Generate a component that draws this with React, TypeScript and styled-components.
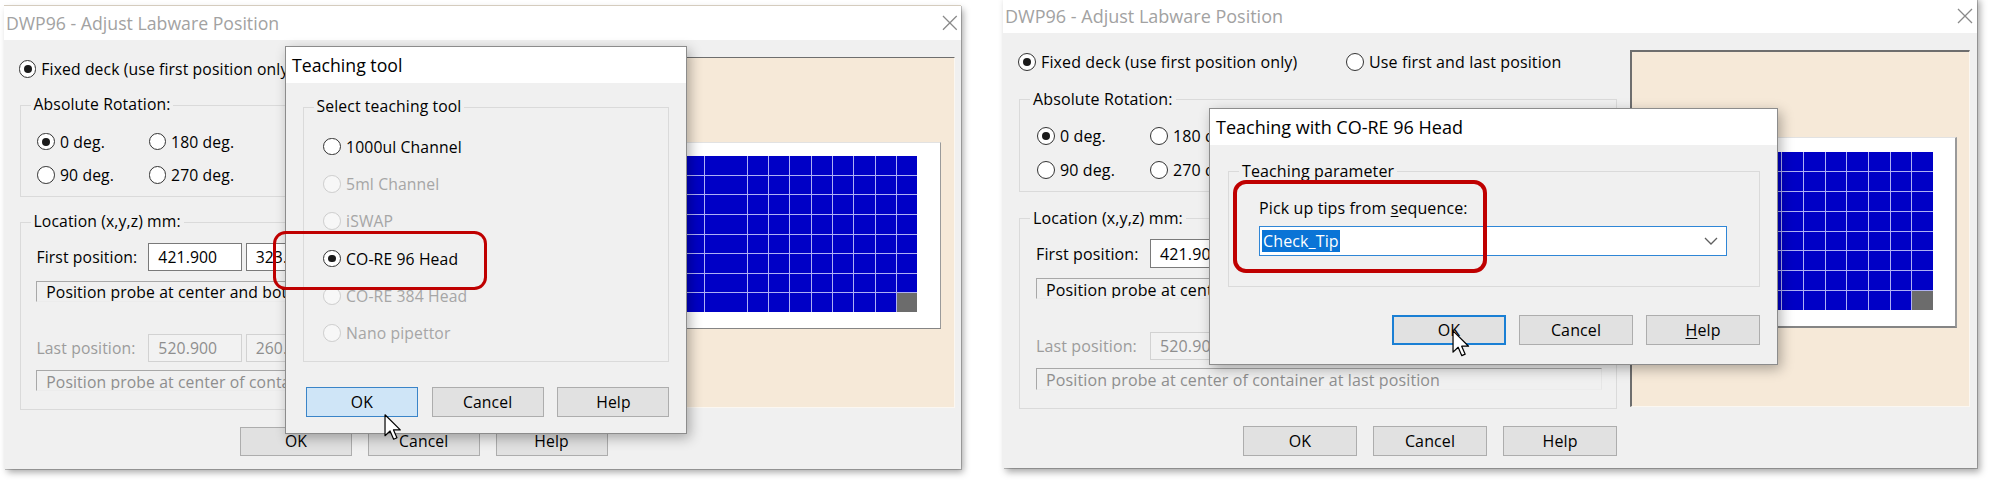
import React from 'react';
import styled, { createGlobalStyle, css } from 'styled-components';

const FONT = `"Open Sans", "Noto Sans", "Liberation Sans", sans-serif`;

const GlobalStyle = createGlobalStyle`
  html, body { margin: 0; padding: 0; background: #ffffff; }
  body { font-family: ${FONT}; overflow: hidden; color: #000; }
  *, *::before, *::after { box-sizing: border-box; }
`;

const Stage = styled.div`
  width: 1989px;
  height: 482px;
  overflow: hidden;
  display: flex;
  align-items: flex-start;
  background: #ffffff;
`;

const Slot = styled.div<{ $left: number; $top: number }>`
  flex: none;
  margin-left: ${(p) => p.$left}px;
  margin-top: ${(p) => p.$top}px;
`;

const WindowFrame = styled.div<{ $zoom: number }>`
  position: relative;
  zoom: ${(p) => p.$zoom};
  width: 974px;
  height: 472px;
  background: #f0f0f0;
  border-top: 2px solid #d5ccbe;
  box-shadow: 1px 1px 0 rgba(0, 0, 0, 0.22), 3px 4px 7px rgba(0, 0, 0, 0.35);
  display: flex;
  flex-direction: column;
  font-size: 16px;
  letter-spacing: 0.12px;
`;

const TitleBar = styled.div`
  height: 35px;
  flex: none;
  background: #ffffff;
  display: flex;
  align-items: center;
  justify-content: space-between;
  padding: 0 4px 0 2px;
`;

const TitleText = styled.span<{ $active?: boolean }>`
  font-size: 18px;
  letter-spacing: 0;
  color: ${(p) => (p.$active ? '#000000' : '#a2a2a2')};
  white-space: nowrap;
`;

const WindowBody = styled.div`
  flex: 1;
  display: grid;
  grid-template-columns: 598px 340px;
  column-gap: 13px;
  align-items: start;
  padding: 17px 7px 0 16px;
`;

const LeftColumn = styled.div`
  display: flex;
  flex-direction: column;
`;

const ModeRow = styled.div`
  height: 24px;
  display: flex;
  align-items: center;
  margin-left: -1px;
`;

const ModeCell = styled.div`
  width: 328px;
  flex: none;
`;

const RadioItem = styled.div<{ $disabled?: boolean }>`
  display: flex;
  align-items: center;
  gap: 5px;
  height: 24px;
  white-space: nowrap;
  color: ${(p) => (p.$disabled ? '#a6a6a6' : '#000000')};
`;

const RadioCircle = styled.span<{ $checked?: boolean; $disabled?: boolean }>`
  width: 18px;
  height: 18px;
  flex: none;
  border-radius: 50%;
  border: 1.6px solid ${(p) => (p.$disabled ? '#cdcdcd' : '#333333')};
  background: ${(p) => (p.$disabled ? '#f7f7f7' : '#ffffff')};
  display: grid;
  place-items: center;
  &::after {
    content: '';
    width: 8px;
    height: 8px;
    border-radius: 50%;
    background: #1b1b1b;
    display: ${(p) => (p.$checked ? 'block' : 'none')};
  }
`;

const Group = styled.fieldset<{ $top: number; $height?: number }>`
  margin: ${(p) => p.$top}px 0 0 0;
  padding: 0;
  border: 1px solid #dadada;
  min-width: 0;
  ${(p) =>
    p.$height !== undefined &&
    css`
      height: ${p.$height}px;
    `}
`;

const Legend = styled.legend`
  margin-left: 10px;
  padding: 0 3px;
  line-height: 20px;
  font-size: 16px;
  white-space: nowrap;
`;

const RotationGrid = styled.div`
  display: grid;
  grid-template-columns: 113px auto;
  row-gap: 10px;
  padding: 15px 0 9px 17px;
`;

const LocationInner = styled.div`
  display: flex;
  flex-direction: column;
  padding: 0 14px 18px 16px;
`;

const CoordRow = styled.div<{ $top: number; $height: number; $disabled?: boolean }>`
  display: flex;
  align-items: center;
  margin-top: ${(p) => p.$top}px;
  height: ${(p) => p.$height}px;
  color: ${(p) => (p.$disabled ? '#9c9c9c' : '#000000')};
`;

const CoordLabel = styled.span`
  width: 114px;
  flex: none;
  white-space: nowrap;
`;

const CoordInputs = styled.div`
  display: flex;
  gap: 4px;
  height: 100%;
`;

const CoordField = styled.div<{ $disabled?: boolean }>`
  width: 95px;
  height: 100%;
  display: flex;
  align-items: center;
  padding-left: 9px;
  background: ${(p) => (p.$disabled ? '#f2f2f2' : '#ffffff')};
  border: 1px solid ${(p) => (p.$disabled ? '#d2d2d2' : '#7a7a7a')};
  color: ${(p) => (p.$disabled ? '#8e8e8e' : '#000000')};
`;

const HintBox = styled.div<{ $top: number; $height: number; $disabled?: boolean }>`
  margin-top: ${(p) => p.$top}px;
  height: ${(p) => p.$height}px;
  padding-left: 9px;
  line-height: ${(p) => p.$height + 1}px;
  white-space: nowrap;
  overflow: hidden;
  border-top: 1px solid #a8a8a8;
  border-left: 1px solid #a8a8a8;
  border-right: 1px solid #e6e6e6;
  border-bottom: 1px solid #ececec;
  color: ${(p) => (p.$disabled ? '#8e8e8e' : '#000000')};
`;

const ButtonRow = styled.div<{ $top: number; $gap: number }>`
  display: flex;
  justify-content: flex-end;
  gap: ${(p) => p.$gap}px;
  margin-top: ${(p) => p.$top}px;
`;

const Button = styled.div<{ $state?: 'hover' | 'focus' }>`
  width: 114px;
  height: 30px;
  flex: none;
  display: flex;
  align-items: center;
  justify-content: center;
  font-size: 16px;
  background: #e1e1e1;
  border: 1px solid #adadad;
  ${(p) =>
    p.$state === 'hover' &&
    css`
      background: #cfe5f7;
      border-color: #3a84c8;
    `}
  ${(p) =>
    p.$state === 'focus' &&
    css`
      border: 2px solid #1a7fd4;
    `}
`;

const Preview = styled.div`
  height: 357px;
  background: #f6e9d8;
  border-top: 2px solid #6e6e6e;
  border-left: 2px solid #6e6e6e;
  border-right: 1px solid #fbf7f1;
  border-bottom: 1px solid #fbf7f1;
  padding: 85px 0 0 18px;
`;

const Plate = styled.div`
  width: 307px;
  height: 191px;
  background: #ffffff;
  border-top: 1px solid #e2e2e2;
  border-left: 1px solid #e2e2e2;
  border-right: 2px solid #9a9a9a;
  border-bottom: 2px solid #858585;
  padding: 14px 0 0 23px;
`;

const WellGrid = styled.div`
  width: 259px;
  height: 158px;
  display: grid;
  grid-template-columns: repeat(12, 1fr);
  grid-template-rows: repeat(8, 1fr);
  gap: 1px;
  background: #aeb0f4;
`;

const Well = styled.div<{ $empty?: boolean }>`
  background: ${(p) => (p.$empty ? '#6c6c6c' : '#0000c6')};
`;

const Dialog = styled.div<{ $left: number; $top: number; $width: number; $height: number }>`
  position: absolute;
  left: ${(p) => p.$left}px;
  top: ${(p) => p.$top}px;
  width: ${(p) => p.$width}px;
  height: ${(p) => p.$height}px;
  background: #f0f0f0;
  border: 1px solid #8c8c8c;
  box-shadow: 3px 4px 12px rgba(0, 0, 0, 0.3);
  display: flex;
  flex-direction: column;
`;

const DialogTitle = styled.div`
  height: 36px;
  flex: none;
  background: #ffffff;
  display: flex;
  align-items: center;
  padding-left: 6px;
`;

const DialogBody = styled.div<{ $pl: number; $pr: number; $pt: number }>`
  flex: 1;
  display: flex;
  flex-direction: column;
  padding: ${(p) => p.$pt}px ${(p) => p.$pr}px 0 ${(p) => p.$pl}px;
`;

const ToolList = styled.div`
  display: flex;
  flex-direction: column;
  gap: 14px;
  padding: 18px 0 0 20px;
`;

const ParamInner = styled.div`
  display: flex;
  flex-direction: column;
  padding: 17px 0 0 30px;
`;

const ParamLabel = styled.div`
  height: 20px;
  line-height: 20px;
  white-space: nowrap;
  u {
    text-decoration-thickness: 1px;
    text-underline-offset: 2px;
  }
`;

const Combo = styled.div`
  margin-top: 8px;
  width: 468px;
  height: 30px;
  background: #ffffff;
  border: 1px solid #2f86d6;
  display: flex;
  align-items: center;
  justify-content: space-between;
  padding: 0 8px 0 2px;
`;

const Selected = styled.span`
  background: #0a74d6;
  color: #ffffff;
  line-height: 22px;
  padding: 0 1px;
`;

const Annotation = styled.div<{ $left: number; $top: number; $width: number; $height: number }>`
  position: absolute;
  left: ${(p) => p.$left}px;
  top: ${(p) => p.$top}px;
  width: ${(p) => p.$width}px;
  height: ${(p) => p.$height}px;
  border: 4px solid #bf0000;
  border-radius: 13px;
  pointer-events: none;
`;

const Pointer = styled.svg<{ $left: number; $top: number }>`
  position: absolute;
  left: ${(p) => p.$left}px;
  top: ${(p) => p.$top}px;
  overflow: visible;
`;

const HelpKey = styled.span`
  u {
    text-decoration-thickness: 1px;
    text-underline-offset: 2px;
  }
`;

function Radio({ label, checked, disabled }: { label: string; checked?: boolean; disabled?: boolean }) {
  return (
    <RadioItem $disabled={disabled}>
      <RadioCircle $checked={checked} $disabled={disabled} />
      <span>{label}</span>
    </RadioItem>
  );
}

function CloseGlyph() {
  return (
    <svg width="16" height="16" viewBox="0 0 16 16">
      <path d="M1 1 L15 15 M15 1 L1 15" stroke="#8a8a8a" strokeWidth="1.3" fill="none" />
    </svg>
  );
}

function Cursor({ left, top }: { left: number; top: number }) {
  return (
    <Pointer $left={left} $top={top} width="18" height="27" viewBox="0 0 13 20">
      <path
        d="M0.6 0.6 L0.6 16.4 L4.4 12.8 L7.1 19 L9.6 17.9 L7 12 L12.1 12 Z"
        fill="#ffffff"
        stroke="#000000"
        strokeWidth="0.9"
        strokeLinejoin="round"
      />
    </Pointer>
  );
}

const wells = Array.from({ length: 96 }, (_, i) => i);

function MainWindow({ zoom, children }: { zoom: number; children?: React.ReactNode }) {
  return (
    <WindowFrame $zoom={zoom}>
      <TitleBar>
        <TitleText>DWP96 - Adjust Labware Position</TitleText>
        <CloseGlyph />
      </TitleBar>
      <WindowBody>
        <LeftColumn>
          <ModeRow>
            <ModeCell>
              <Radio label="Fixed deck (use first position only)" checked />
            </ModeCell>
            <Radio label="Use first and last position" />
          </ModeRow>
          <Group $top={15}>
            <Legend>Absolute Rotation:</Legend>
            <RotationGrid>
              <Radio label="0 deg." checked />
              <Radio label="180 deg." />
              <Radio label="90 deg." />
              <Radio label="270 deg." />
            </RotationGrid>
          </Group>
          <Group $top={16}>
            <Legend>Location (x,y,z) mm:</Legend>
            <LocationInner>
              <CoordRow $top={11} $height={29}>
                <CoordLabel>First position:</CoordLabel>
                <CoordInputs>
                  <CoordField>421.900</CoordField>
                  <CoordField>323.500</CoordField>
                  <CoordField>15.300</CoordField>
                </CoordInputs>
              </CoordRow>
              <HintBox $top={10} $height={21}>
                Position probe at center and bottom of container at first position
              </HintBox>
              <CoordRow $top={33} $height={28} $disabled>
                <CoordLabel>Last position:</CoordLabel>
                <CoordInputs>
                  <CoordField $disabled>520.900</CoordField>
                  <CoordField $disabled>260.500</CoordField>
                  <CoordField $disabled>15.300</CoordField>
                </CoordInputs>
              </CoordRow>
              <HintBox $top={8} $height={22} $disabled>
                Position probe at center of container at last position
              </HintBox>
            </LocationInner>
          </Group>
          <ButtonRow $top={17} $gap={16}>
            <Button>OK</Button>
            <Button>Cancel</Button>
            <Button>Help</Button>
          </ButtonRow>
        </LeftColumn>
        <Preview>
          <Plate>
            <WellGrid>
              {wells.map((i) => (
                <Well key={i} $empty={i === 95} />
              ))}
            </WellGrid>
          </Plate>
        </Preview>
      </WindowBody>
      {children}
    </WindowFrame>
  );
}

export default function App() {
  return (
    <>
      <GlobalStyle />
      <Stage>
        <Slot $left={4} $top={5}>
          <MainWindow zoom={0.983}>
            <Dialog $left={286} $top={41} $width={409} $height={394}>
              <DialogTitle>
                <TitleText $active>Teaching tool</TitleText>
              </DialogTitle>
              <DialogBody $pl={17} $pr={17} $pt={15}>
                <Group $top={0} $height={269}>
                  <Legend>Select teaching tool</Legend>
                  <ToolList>
                    <Radio label="1000ul Channel" />
                    <Radio label="5ml Channel" disabled />
                    <Radio label="iSWAP" disabled />
                    <Radio label="CO-RE 96 Head" checked />
                    <Radio label="CO-RE 384 Head" disabled />
                    <Radio label="Nano pipettor" disabled />
                  </ToolList>
                </Group>
                <ButtonRow $top={26} $gap={14}>
                  <Button $state="hover">OK</Button>
                  <Button>Cancel</Button>
                  <Button>Help</Button>
                </ButtonRow>
              </DialogBody>
            </Dialog>
            <Annotation $left={274} $top={229} $width={217} $height={60} />
            <Cursor left={387} top={415} />
          </MainWindow>
        </Slot>
        <Slot $left={41.6} $top={-4}>
          <MainWindow zoom={1}>
            <Dialog $left={206} $top={110} $width={569} $height={257}>
              <DialogTitle>
                <TitleText $active>Teaching with CO-RE 96 Head</TitleText>
              </DialogTitle>
              <DialogBody $pl={18} $pr={17} $pt={16}>
                <Group $top={0} $height={126}>
                  <Legend>Teaching parameter</Legend>
                  <ParamInner>
                    <ParamLabel>
                      Pick up tips from <u>s</u>equence:
                    </ParamLabel>
                    <Combo>
                      <Selected>Check_Tip</Selected>
                      <svg width="14" height="8" viewBox="0 0 14 8">
                        <path d="M1 1 L7 7 L13 1" stroke="#5f5f5f" strokeWidth="1.3" fill="none" />
                      </svg>
                    </Combo>
                  </ParamInner>
                </Group>
                <ButtonRow $top={28} $gap={13}>
                  <Button $state="focus">OK</Button>
                  <Button>Cancel</Button>
                  <Button>
                    <HelpKey>
                      <u>H</u>elp
                    </HelpKey>
                  </Button>
                </ButtonRow>
              </DialogBody>
            </Dialog>
            <Annotation $left={230} $top={182} $width={254} $height={93} />
            <Cursor left={449} top={332} />
          </MainWindow>
        </Slot>
      </Stage>
    </>
  );
}
